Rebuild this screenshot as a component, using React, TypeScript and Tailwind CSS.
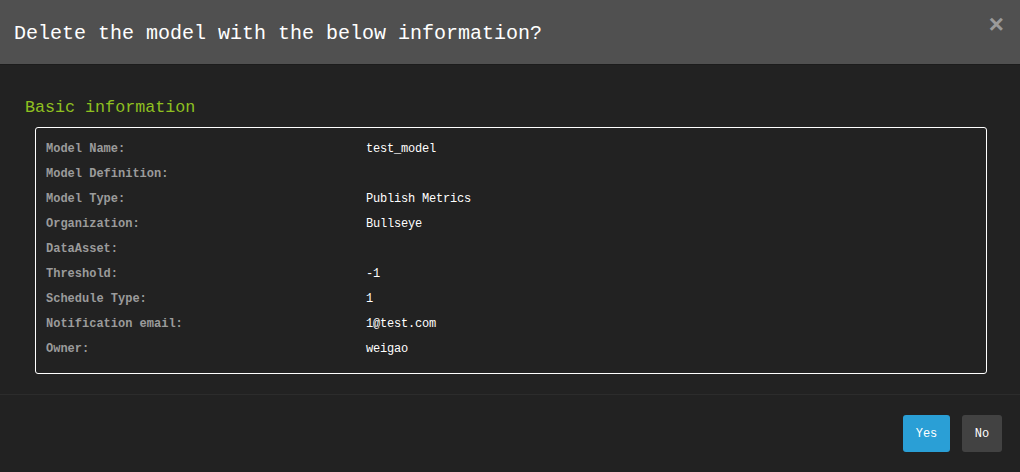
import React from "react";

const rows: [string, string][] = [
  ["Model Name:", "test_model"],
  ["Model Definition:", ""],
  ["Model Type:", "Publish Metrics"],
  ["Organization:", "Bullseye"],
  ["DataAsset:", ""],
  ["Threshold:", "-1"],
  ["Schedule Type:", "1"],
  ["Notification email:", "1@test.com"],
  ["Owner:", "weigao"],
];

export default function App() {
  return (
    <div
      className="w-[1020px] h-[472px] bg-[#222222] flex flex-col overflow-hidden"
      style={{ fontFamily: '"Liberation Mono", "DejaVu Sans Mono", monospace' }}
    >
      <div className="h-[65px] shrink-0 bg-[#505050] flex items-center justify-between pl-[14px] pr-[16px] border-b border-[#1c1c1c]">
        <div className="text-[20px] text-white leading-none pt-[4px]">
          Delete the model with the below information?
        </div>
        <div className="text-[26px] text-[#9a9a9a] font-bold leading-none -mt-[13px]">×</div>
      </div>
      <div className="pt-[32px] pb-[20px] pl-[25px] pr-[33px] border-b border-[#2c2c2c]">
        <div className="text-[16.7px] leading-[20px] text-[#8fc020] mb-[9px] pt-[1px]">Basic information</div>
        <div className="ml-[10px] border border-white rounded-[3px] pt-[8px] pb-[12px] pl-[10px]">
          {rows.map(([k, v]) => (
            <div key={k} className="flex h-[25px] items-center text-[12px]">
              <div className="w-[320px] text-[#9b9b9b] font-bold">{k}</div>
              <div className="text-white tracking-[-0.2px]">{v}</div>
            </div>
          ))}
        </div>
      </div>
      <div className="flex justify-end gap-[12px] pt-[20px] pr-[18px]">
        <button className="w-[47px] h-[37px] bg-[#2a9fd6] text-white text-[12px] rounded-[3px]">Yes</button>
        <button className="w-[40px] h-[37px] bg-[#424242] text-white text-[12px] rounded-[3px]">No</button>
      </div>
    </div>
  );
}
